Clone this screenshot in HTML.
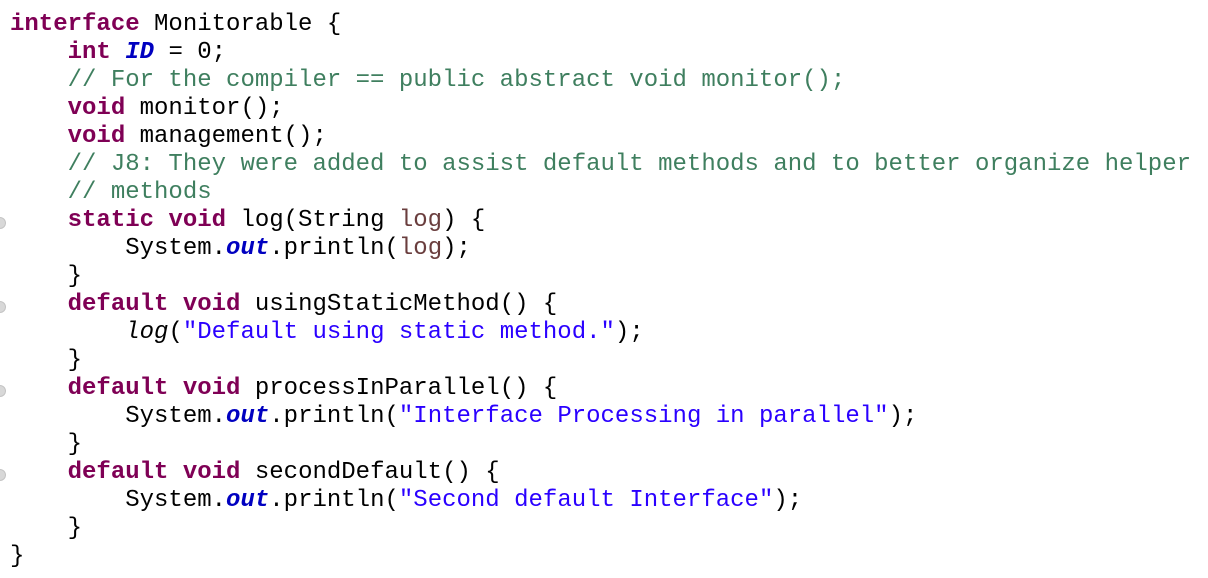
<!DOCTYPE html>
<html><head><meta charset="utf-8"><style>
html,body{margin:0;padding:0;background:#fff;width:1208px;height:578px;overflow:hidden}
pre{margin:0;position:absolute;left:10px;top:11px;font-family:"Liberation Mono",monospace;font-size:24px;line-height:28px;color:#000}
.k{color:#7f0055;font-weight:bold}
.c{color:#3f7f5f}
.s{color:#2a00ff}
.f{color:#0000c0;font-weight:bold;font-style:italic}
.p{color:#6a3e3e}
.i{font-style:italic}
.m{position:absolute;left:-6px;width:10px;height:10px;border-radius:50%;background:#d8d8d8;border:1px solid #c4c4c4}
</style></head><body>
<div class="m" style="top:217px"></div>
<div class="m" style="top:301px"></div>
<div class="m" style="top:385px"></div>
<div class="m" style="top:469px"></div>
<pre><span class="k">interface</span> Monitorable {
    <span class="k">int</span> <span class="f">ID</span> = 0;
    <span class="c">// For the compiler == public abstract void monitor();</span>
    <span class="k">void</span> monitor();
    <span class="k">void</span> management();
    <span class="c">// J8: They were added to assist default methods and to better organize helper</span>
    <span class="c">// methods</span>
    <span class="k">static</span> <span class="k">void</span> log(String <span class="p">log</span>) {
        System.<span class="f">out</span>.println(<span class="p">log</span>);
    }
    <span class="k">default</span> <span class="k">void</span> usingStaticMethod() {
        <span class="i">log</span>(<span class="s">"Default using static method."</span>);
    }
    <span class="k">default</span> <span class="k">void</span> processInParallel() {
        System.<span class="f">out</span>.println(<span class="s">"Interface Processing in parallel"</span>);
    }
    <span class="k">default</span> <span class="k">void</span> secondDefault() {
        System.<span class="f">out</span>.println(<span class="s">"Second default Interface"</span>);
    }
}</pre>
</body></html>
